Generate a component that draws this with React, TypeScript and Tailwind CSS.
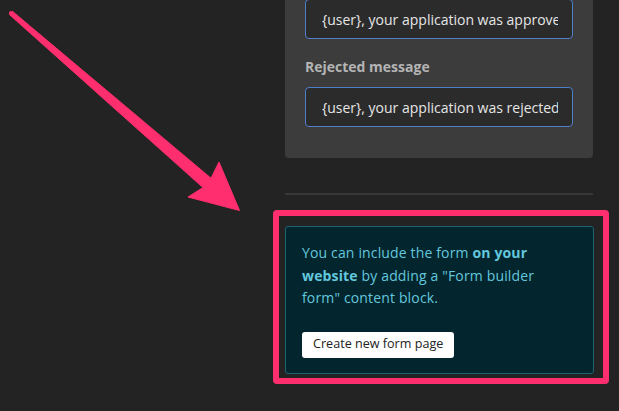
// App.tsx
// Form settings column with an annotation arrow pointing at the embed hint.

const font = { fontFamily: '"Open Sans", "Noto Sans", sans-serif' };

const inputCls =
  "h-[40px] w-full rounded-[4px] border border-[#4f7fc9] bg-[#2b2b2b] pl-[16px] pr-[14px] " +
  "text-[14px] text-[#e6e6e6] outline-none";

function Arrow() {
  return (
    <svg
      className="pointer-events-none absolute left-0 top-0"
      width="260"
      height="230"
      viewBox="0 0 260 230"
    >
      <path
        d="M12.4 11.3 L211 178.2 L219 162 L239.5 210.5 L188 197 L203 187.6 L9.6 14.7 Z"
        fill="#ff2e6e"
        stroke="#ff2e6e"
        strokeWidth="1"
        strokeLinejoin="round"
      />
      <circle cx="11" cy="13" r="2.1" fill="#ff2e6e" />
    </svg>
  );
}

export default function App() {
  return (
    <div className="relative h-[411px] w-[619px] overflow-hidden bg-[#232323]" style={font}>
      <Arrow />

      <div className="ml-[285px] w-[308px]">
        {/* Messages panel (scrolled, top cut off) */}
        <div className="rounded-b-[4px] bg-[#3c3c3c] px-[20px] pb-[31px]">
          <input
            readOnly
            value="{user}, your application was approved"
            className={inputCls + " -mt-[1px] block"}
          />
          <label className="mt-[18px] block text-[14px] font-bold leading-[20px] text-[#b4b4b4]">
            Rejected message
          </label>
          <input
            readOnly
            value="{user}, your application was rejected"
            className={inputCls + " mt-[10px] block"}
          />
        </div>

        <div className="mt-[35px] h-[2px] bg-[#383838]" />

        {/* Embed hint */}
        <div className="mt-[31px] w-[309px] rounded-[3px] border border-[#1a6470] bg-[#03252d] px-[16px] pb-[15px] pt-[15px]">
          <p className="max-w-[256px] text-[14px] leading-[22.5px] tracking-[0.15px] text-[#62c8de]">
            You can include the form <b>on your website</b> by adding a "Form builder form"
            content block.
          </p>
          <button
            type="button"
            className="mt-[22px] h-[26px] rounded-[3px] bg-white px-[11px] text-[12.6px] text-[#222]"
          >
            Create new form page
          </button>
        </div>
      </div>

      {/* Highlight frame */}
      <div className="pointer-events-none absolute left-[273px] top-[210px] h-[174px] w-[336px] rounded-[4px] border-[6px] border-[#ff2e6e]" />
    </div>
  );
}
